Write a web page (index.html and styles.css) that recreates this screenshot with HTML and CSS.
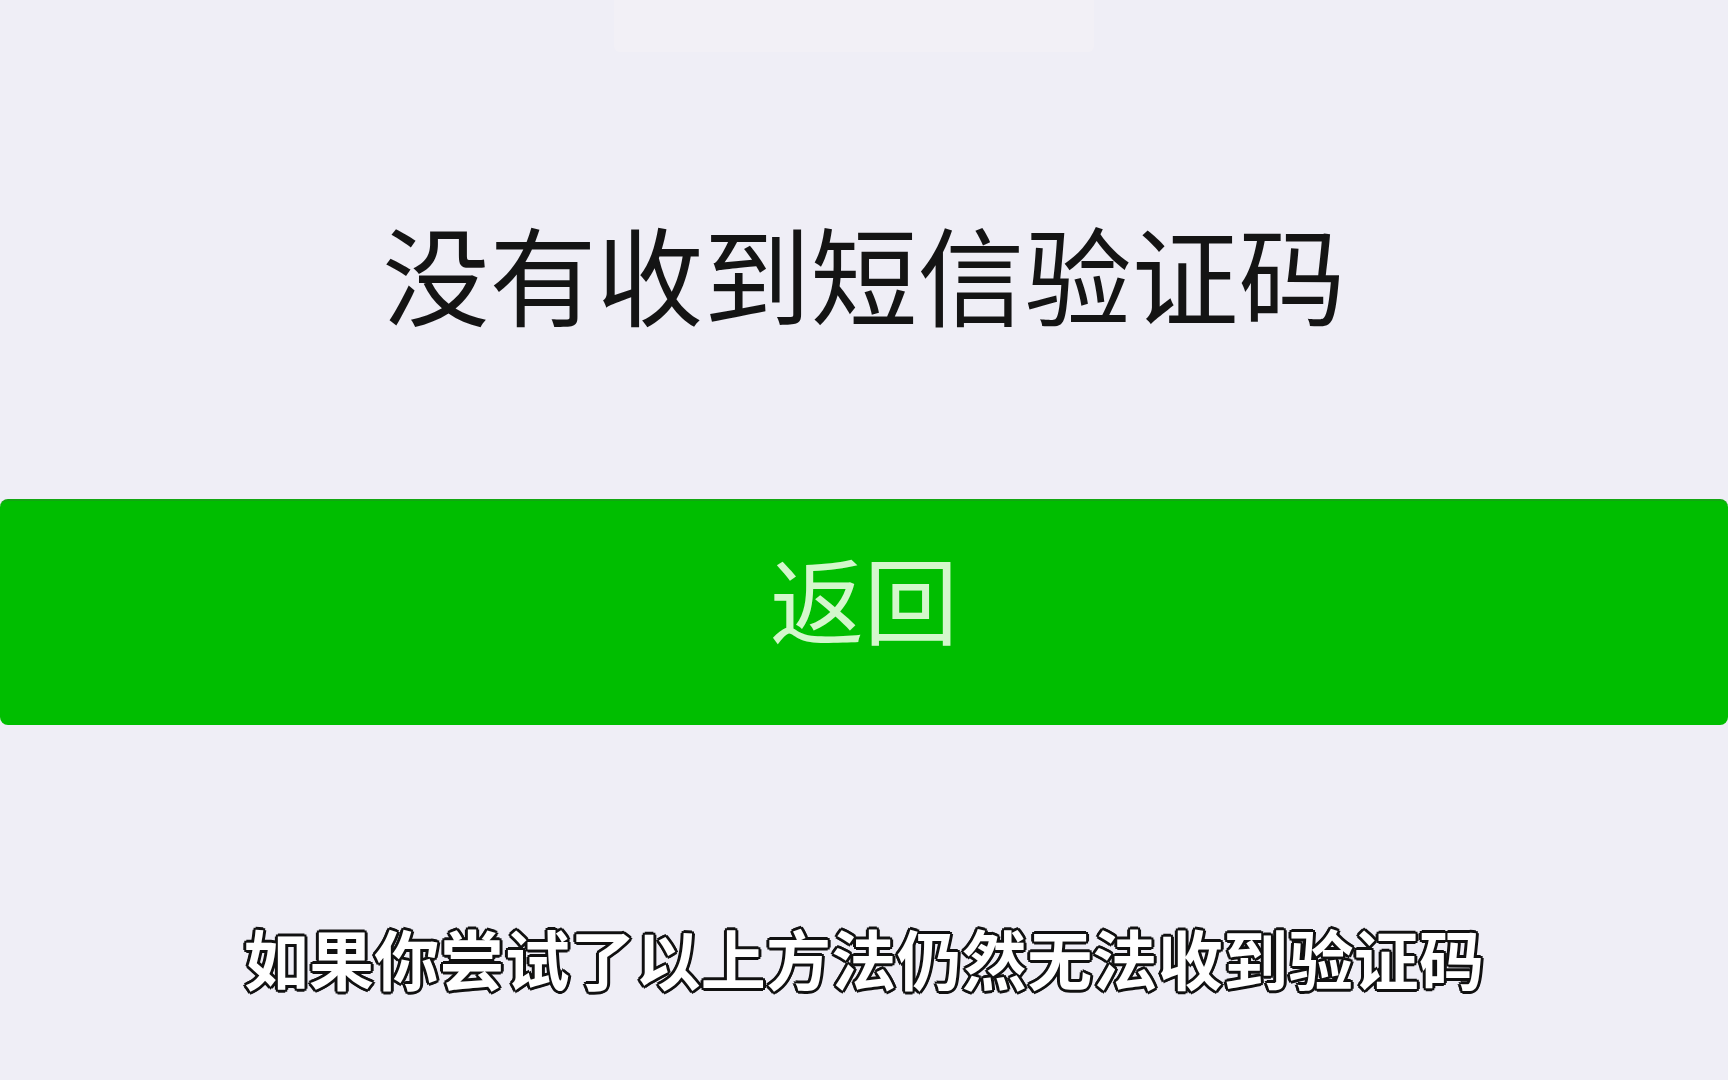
FILE: index.html
```html
<!DOCTYPE html>
<html lang="zh-CN">
<head>
<meta charset="utf-8">
<title>没有收到短信验证码</title>
<link rel="stylesheet" href="styles.css">
</head>
<body>
<main class="page">
  <div class="ghost"></div>
  <h1 class="title">没有收到短信验证码</h1>
  <button class="back-btn">返回</button>
  <p class="subtitle">如果你尝试了以上方法仍然无法收到验证码</p>
</main>
</body>
</html>
```
FILE: styles.css
```css
html, body {
  margin: 0;
  padding: 0;
  background: #efeef6;
}
.page {
  width: 1728px;
  height: 1080px;
  display: flex;
  flex-direction: column;
  align-items: center;
  font-family: "Noto Sans CJK SC", "Noto Sans", sans-serif;
  overflow: hidden;
}
.ghost {
  width: 480px;
  height: 52px;
  margin-left: -20px;
  background: #f2f0f6;
  border-radius: 0 0 6px 6px;
}
.title {
  margin: 160px 0 0 0;
  font-size: 107px;
  line-height: 120px;
  font-weight: 400;
  color: #141414;
  letter-spacing: 0;
}
.back-btn {
  margin-top: 167px;
  width: 100%;
  height: 226px;
  border: none;
  border-top: 2px solid #12a712;
  border-radius: 8px;
  background: #00be00;
  color: #d4f7cc;
  font-family: "Noto Sans CJK SC", "Noto Sans", sans-serif;
  font-size: 94px;
  font-weight: 400;
  padding: 0 0 32px 0;
  line-height: 1;
}
.subtitle {
  margin: 192px 0 0 0;
  font-size: 65px;
  line-height: 80px;
  font-weight: 700;
  color: #ffffff;
  letter-spacing: 0.3px;
  text-shadow:
    -3px 0 0 #111, 3px 0 0 #111, 0 -3px 0 #111, 0 3px 0 #111,
    -2px -2px 0 #111, 2px -2px 0 #111, -2px 2px 0 #111, 2px 2px 0 #111;
}
```
